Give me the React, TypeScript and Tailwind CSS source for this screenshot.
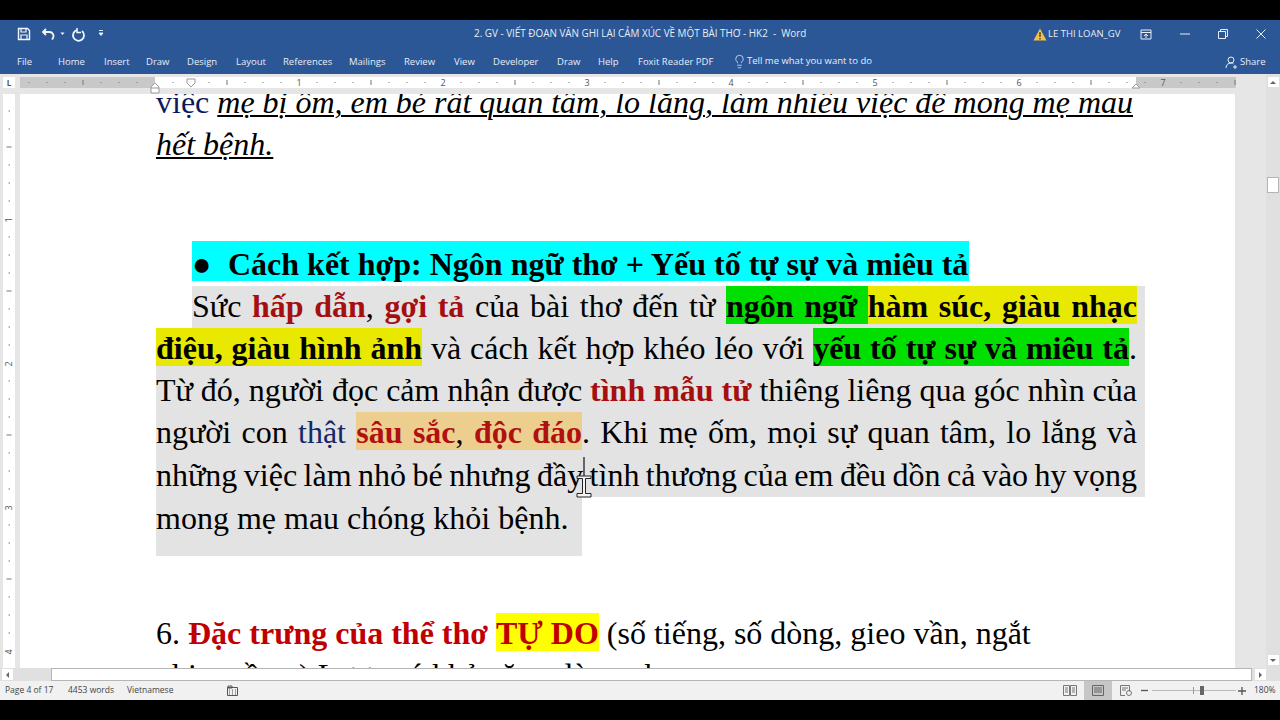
import React from "react";
import { Lightbulb } from "lucide-react";

const tabs = [
	{ label: "File", cls: "w-[41px]" },
	{ label: "Home", cls: "w-[46px]" },
	{ label: "Insert", cls: "w-[42px]" },
	{ label: "Draw", cls: "w-[41px]" },
	{ label: "Design", cls: "w-[49px]" },
	{ label: "Layout", cls: "w-[47px]" },
	{ label: "References", cls: "w-[66px]" },
	{ label: "Mailings", cls: "w-[55px]" },
	{ label: "Review", cls: "w-[50px]" },
	{ label: "View", cls: "w-[39px]" },
	{ label: "Developer", cls: "w-[64px]" },
	{ label: "Draw", cls: "w-[41px]" },
	{ label: "Help", cls: "w-[40px]" },
	{ label: "Foxit Reader PDF", cls: "w-[94px]" },
];

function QuickAccess() {
	return (
		<svg width="110" height="28" viewBox="0 0 110 28" fill="none" stroke="#f2f5fa" className="shrink-0">
			<path d="M18.500 8.500h9l2 2v9h-11z" strokeWidth="1.400" />
			<path d="M21 8.500v3.500h5V8.500M21 19.500v-4.500h6v4.500" strokeWidth="1.200" />
			<g transform="translate(2 0)">
				<path d="M44 9l-3 3 3 3" strokeWidth="1.800" />
				<path d="M41.500 12h6a4 4 0 0 1 3.500 6l-1 1.500" strokeWidth="1.800" />
				<path d="M58.500 12.500h4l-2 2.500z" fill="#f2f5fa" stroke="none" />
				<path d="M75 10a5.500 5.500 0 1 0 5 1" strokeWidth="1.800" />
				<path d="M75 8v4.500h4" strokeWidth="1.500" />
			</g>
			<path d="M99 10.500h4M99 13h4l-2 2.500z" strokeWidth="0.900" fill="#f2f5fa" />
		</svg>
	);
}

function TitleBar() {
	return (
		<div className="flex h-[28px] shrink-0 items-center bg-[#2b5797] text-[#e8edf5]">
			<div className="w-[474px] shrink-0">
				<QuickAccess />
			</div>
			<div className="flex-1 whitespace-nowrap pb-[2px] text-[9.900px]">2. GV - VIẾT ĐOẠN VĂN GHI LẠI CẢM XÚC VỀ MỘT BÀI THƠ - HK2&nbsp; -&nbsp; Word</div>
			<div className="flex w-[247px] shrink-0 items-center text-[9.500px]">
				<svg width="14" height="13" viewBox="0 0 14 13" className="shrink-0">
					<path d="M7 0.500L13.500 12.500H0.500z" fill="#f3c04c" />
					<path d="M6.300 4h1.400v5h-1.400zM6.300 10h1.400v1.400h-1.400z" fill="#5a4310" />
				</svg>
				<span className="ml-[1px] w-[92px] shrink-0 whitespace-nowrap">LE THI LOAN_GV</span>
				<svg width="12" height="11" viewBox="0 0 12 11" fill="none" stroke="#e8edf5" className="shrink-0">
					<path d="M1 1h10v9H1zM1 3.500h10M6 9V5.500M4 7l2-2 2 2" />
				</svg>
				<svg width="10" height="2" viewBox="0 0 10 2" className="ml-[28px] shrink-0">
					<path d="M0 1h10" stroke="#e8edf5" />
				</svg>
				<svg width="10" height="10" viewBox="0 0 10 10" fill="none" stroke="#e8edf5" className="ml-[28px] shrink-0">
					<path d="M0.500 2.500h7v7h-7zM2.500 2.500v-2h7v7h-2" />
				</svg>
				<svg width="10" height="10" viewBox="0 0 10 10" fill="none" stroke="#e8edf5" className="ml-[28px] shrink-0">
					<path d="M0.500 0.500l9 9M9.500 0.500l-9 9" />
				</svg>
			</div>
		</div>
	);
}

function TabBar() {
	return (
		<div className="flex h-[26px] shrink-0 items-start bg-[#2b5797] pl-[17px] text-[9.500px] text-[#e8edf5]">
			<div className="flex pt-[7px]">
				{tabs.map((t, i) => (
					<div key={i} className={`${t.cls} shrink-0 whitespace-nowrap`}>
						{t.label}
					</div>
				))}
			</div>
			<div className="flex w-[493px] shrink-0 items-center pt-[6px]">
				<Lightbulb size={15} strokeWidth={1.200} className="shrink-0" />
				<span className="w-[478px] shrink-0 whitespace-nowrap">Tell me what you want to do</span>
			</div>
			<div className="flex shrink-0 items-center pt-[7px]">
				<svg width="13" height="13" viewBox="0 0 13 13" fill="none" stroke="#e8edf5" className="shrink-0">
					<circle cx="6" cy="4" r="3" />
					<path d="M1 12c0-3 2-5 5-5 1 0 2 .300 2.500 .800M8 11h4M10 9v4" />
				</svg>
				<span className="ml-[2px] whitespace-nowrap">Share</span>
			</div>
		</div>
	);
}

function HRuler() {
	const ticks = Array.from({ length: 68 }, (_, i) => i);
	return (
		<svg width="1216" height="20" viewBox="0 0 1216 20" className="block shrink-0">
			<rect x="0" y="3" width="1216" height="11" fill="#ffffff" />
			<rect x="0" y="3" width="135" height="11" fill="#c8c8c8" />
			<rect x="1116" y="3" width="100" height="11" fill="#c8c8c8" />
			{ticks.map((i) => {
				const x = 9 + i * 18;
				const fromZero = i - 7;
				if (fromZero === 0 || fromZero % 8 === 0) return null;
				const long = fromZero % 4 === 0;
				return <rect key={i} x={x - 0.5} y={long ? 6 : 8} width="1" height={long ? 5 : 1} fill="#777777" />;
			})}
			{[1, 2, 3, 4, 5, 6, 7].map((n) => (
				<text key={n} x={135 + n * 144} y="12" textAnchor="middle" fontSize="9" fill="#555555" fontFamily="Open Sans, sans-serif">
					{n}
				</text>
			))}
			<path d="M167 5h8v4l-4 4-4-4z" fill="#ffffff" stroke="#999999" />
			<path d="M131 19v-6l4-4 4 4v6z" fill="#ffffff" stroke="#999999" />
			<path d="M131 14h8" stroke="#999999" />
			<path d="M1112 14l4-4 4 4z" fill="#ffffff" stroke="#999999" />
		</svg>
	);
}

function VRuler() {
	const ticks = Array.from({ length: 32 }, (_, i) => i);
	return (
		<svg width="12" height="574" viewBox="0 0 12 574" className="block shrink-0">
			<rect x="0" y="0" width="12" height="574" fill="#ffffff" />
			{ticks.map((i) => {
				const y = 17 + i * 18;
				const k = i % 8;
				if (k === 6) return null;
				const long = k === 2;
				return <rect key={i} x={long ? 3.500 : 5.500} y={y - 0.5} width={long ? 5 : 1.500} height="1" fill="#777777" />;
			})}
			{[1, 2, 3, 4].map((n) => (
				<text
					key={n}
					x="6"
					y={-18 + n * 144}
					textAnchor="middle"
					fontSize="9"
					fill="#555555"
					fontFamily="Open Sans, sans-serif"
					transform={`rotate(-90 6 ${-18 + n * 144})`}
					dy="3"
				>
					{n}
				</text>
			))}
		</svg>
	);
}

function IBeam() {
	return (
		<svg width="18" height="44" viewBox="0 0 18 44" className="absolute left-[555px] top-[363px]">
			<path d="M9 0v38" stroke="#222222" strokeWidth="1.300" />
			<path d="M2 19h14v2.500h-5.500v15H16V40H2v-3.500h5.500v-15H2z" fill="#f4f4f4" stroke="#222222" strokeWidth="1" />
		</svg>
	);
}

function Document() {
	const row = "h-[42.300px] leading-[41px] [text-align-last:justify]";
	return (
		<div className="relative h-[574px] w-[1215px] shrink-0 overflow-hidden bg-white pl-[136px] text-[32px] text-black">
			<div className="mt-[-12px] w-[977px]">
				<div className={`${row} [word-spacing:-2px]`}>
					<span className="text-[#0b1a5e]">việc</span>{" "}
					<span className="italic underline decoration-2 underline-offset-2">mẹ bị ốm, em bé rất quan tâm, lo lắng, làm nhiều việc để mong mẹ mau</span>
				</div>
				<div className="h-[42.300px] leading-[41px]">
					<span className="italic underline decoration-2 underline-offset-2">hết bệnh.</span>
				</div>
			</div>
			<div className="ml-[36px] mt-[74px] flex h-[40px] w-[777px] items-center whitespace-nowrap bg-[#00ffff] pt-[6px] font-bold leading-none">
				<span className="w-[36px] shrink-0">●</span>
				<span>Cách kết hợp: Ngôn ngữ thơ + Yếu tố tự sự và miêu tả</span>
			</div>
			<div className="mt-[5px]">
				<div className={`${row} ml-[36px] w-[953px] bg-[#e3e3e3] pr-[8px]`}>
					Sức <b className="text-[#a50f0f]">hấp dẫn</b>, <b className="text-[#a50f0f]">gợi tả</b> của bài thơ đến từ{" "}
					<b className="bg-[#00df00] pt-[2px]">ngôn ngữ </b>
					<b className="bg-[#e8e800] pt-[2px]">hàm súc, giàu nhạc</b>
				</div>
				<div className={`${row} w-[989px] bg-[#e3e3e3] pr-[8px]`}>
					<b className="bg-[#e8e800] pt-[2px]">điệu, giàu hình ảnh</b> và cách kết hợp khéo léo với{" "}
					<b className="bg-[#00df00] pt-[2px]">yếu tố tự sự và miêu tả</b>.
				</div>
				<div className={`${row} w-[989px] bg-[#e3e3e3] pr-[8px] [word-spacing:-1px]`}>
					Từ đó, người đọc cảm nhận được <b className="text-[#a50f0f]">tình mẫu tử</b> thiêng liêng qua góc nhìn của
				</div>
				<div className={`${row} w-[989px] bg-[#e3e3e3] pr-[8px]`}>
					người con <span className="text-[#14286a]">thật</span>{" "}
					<span className="bg-[#eccf8f] pt-[2px]">
						<b className="text-[#b01010]">sâu sắc</b>, <b className="text-[#b01010]">độc đáo</b>
					</span>
					. Khi mẹ ốm, mọi sự quan tâm, lo lắng và
				</div>
				<div className={`${row} w-[989px] bg-[#e3e3e3] pr-[8px] [word-spacing:-2px]`}>
					những việc làm nhỏ bé nhưng đầy tình thương của em đều dồn cả vào hy vọng
				</div>
				<div className="h-[59px] w-[426px] whitespace-nowrap bg-[#e3e3e3] leading-[42px]">mong mẹ mau chóng khỏi bệnh.</div>
			</div>
			<div className="mt-[56px] h-[42.300px] whitespace-nowrap leading-[42.300px]">
				6. <b className="text-[#c00000]">Đặc trưng của thể thơ</b>{" "}
				<b className="bg-[#ffff00] pt-[2px] text-[#c00000]">TỰ DO</b> (số tiếng, số dòng, gieo vần, ngắt
			</div>
			<div className="h-[42.300px] whitespace-nowrap leading-[42.300px]">nhịp, vần...) Lược có khả năng dòng nhạc</div>
			<IBeam />
		</div>
	);
}

function VScroll() {
	return (
		<div className="flex h-full w-[14px] shrink-0 flex-col items-center bg-[#e0e0e0] pt-[3px]">
			<div className="flex h-[10px] w-[11px] items-center justify-center bg-white">
				<div className="h-0 w-0 border-x-[3px] border-b-[3px] border-x-transparent border-b-[#666666]" />
			</div>
			<div className="mt-[90px] h-[16px] w-[12px] border border-[#b5b5b5] bg-white" />
			<div className="flex-1" />
			<div className="mb-[3px] flex h-[10px] w-[11px] items-center justify-center bg-white">
				<div className="h-0 w-0 border-x-[3px] border-t-[3px] border-x-transparent border-t-[#666666]" />
			</div>
		</div>
	);
}

function HScroll() {
	return (
		<div className="flex h-[13px] shrink-0 items-center bg-[#e0e0e0] pl-[2px]">
			<div className="flex h-[11px] w-[11px] shrink-0 items-center justify-center bg-white">
				<div className="h-0 w-0 border-y-[3px] border-r-[3px] border-y-transparent border-r-[#666666]" />
			</div>
			<div className="ml-[38px] h-[13px] w-[1201px] shrink-0 border border-[#b5b5b5] bg-white" />
			<div className="ml-[3px] flex h-[11px] w-[11px] shrink-0 items-center justify-center bg-white">
				<div className="h-0 w-0 border-y-[3px] border-l-[3px] border-y-transparent border-l-[#666666]" />
			</div>
		</div>
	);
}

function StatusBar() {
	return (
		<div className="flex h-[19px] shrink-0 items-center bg-[#f1f1f1] text-[8.500px] text-[#444444]">
			<span className="ml-[5px] w-[63px] shrink-0 whitespace-nowrap">Page 4 of 17</span>
			<span className="w-[59px] shrink-0 whitespace-nowrap">4453 words</span>
			<span className="w-[100px] shrink-0 whitespace-nowrap">Vietnamese</span>
			<svg width="11" height="11" viewBox="0 0 11 11" fill="none" stroke="#555555" className="shrink-0">
				<path d="M0.500 2.500h10v8h-10z" />
				<path d="M1 1h4v2H1zM2 5h1M5 5h1M8 5h1M2 7h1M5 7h1M8 7h1M2 9h1M5 9h1M8 9h1" />
			</svg>
			<div className="flex-1" />
			<svg width="14" height="11" viewBox="0 0 14 11" fill="none" stroke="#777777" className="shrink-0">
				<path d="M0.500 0.500h6v10h-6zM7.500 0.500h6v10h-6zM2 3h3M2 5h3M2 7h3M9 3h3M9 5h3M9 7h3" />
			</svg>
			<div className="ml-[7px] flex h-[19px] w-[28px] shrink-0 items-center justify-center bg-[#c6c6c6]">
				<svg width="12" height="11" viewBox="0 0 12 11" fill="none" stroke="#666666">
					<path d="M0.500 0.500h11v10h-11zM2 3h8M2 5h8M2 7h8" />
				</svg>
			</div>
			<svg width="12" height="11" viewBox="0 0 12 11" fill="none" stroke="#777777" className="ml-[8px] shrink-0">
				<path d="M0.500 0.500h9v6M5 10.500H0.500v-10M2 3h6M2 5h4" />
				<circle cx="9" cy="8" r="2.500" />
			</svg>
			<svg width="7" height="7" viewBox="0 0 7 7" className="ml-[9px] shrink-0">
				<path d="M0 3.500h7" stroke="#555555" strokeWidth="1.300" />
			</svg>
			<div className="relative ml-[4px] h-[1px] w-[84px] shrink-0 bg-[#bbbbbb]">
				<div className="absolute left-[41px] top-[-3px] h-[7px] w-[1px] bg-[#999999]" />
				<div className="absolute left-[48px] top-[-4px] h-[9px] w-[4px] bg-[#666666]" />
			</div>
			<svg width="8" height="8" viewBox="0 0 8 8" className="ml-[2px] shrink-0">
				<path d="M0 4h8M4 0v8" stroke="#555555" strokeWidth="1.300" />
			</svg>
			<span className="ml-[8px] w-[26px] shrink-0 whitespace-nowrap">180%</span>
		</div>
	);
}

export default function App() {
	return (
		<div className="flex h-[720px] w-[1280px] flex-col overflow-hidden bg-black font-['Open_Sans',sans-serif]">
			<div className="h-[20px] shrink-0" />
			<TitleBar />
			<TabBar />
			<div className="flex h-[594px] shrink-0 bg-[#e6e6e6]">
				<div className="w-[20px] shrink-0 pl-[3px]">
					<div className="mt-[3px] flex h-[11px] w-[12px] items-center justify-center bg-white text-[8px] font-bold leading-none text-[#555555]">L</div>
					<div className="mt-[6px]">
						<VRuler />
					</div>
				</div>
				<div className="flex w-[1216px] shrink-0 flex-col font-['Liberation_Serif',serif]">
					<HRuler />
					<Document />
				</div>
				<div className="w-[30px] shrink-0" />
				<VScroll />
			</div>
			<HScroll />
			<StatusBar />
			<div className="h-[20px] shrink-0" />
		</div>
	);
}
